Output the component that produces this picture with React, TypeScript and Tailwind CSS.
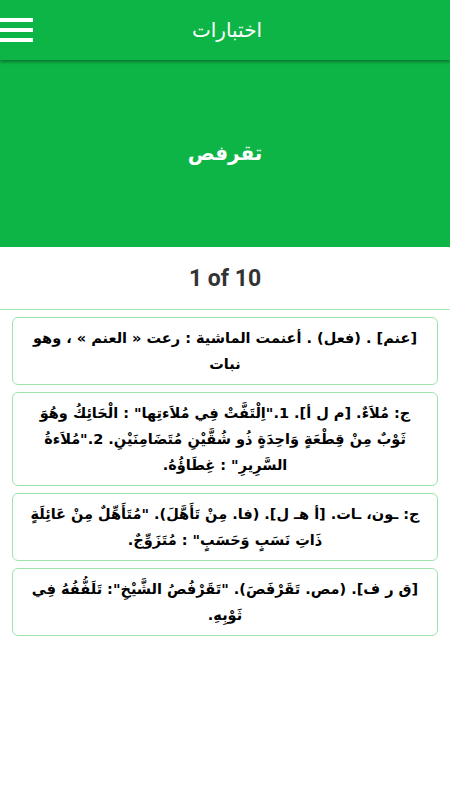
import React from "react";

const cards = [
  "[عنم] .  (فعل) . أعنمت الماشية : رعت « العنم » ، وهو نبات",
  "ج: مُلاَءٌ. [م ل أ]. 1.\"اِلْتَفَّتْ فِي مُلاَءتِها\" : الْحَائِكُ وهُوَ ثَوْبٌ\u00a0مِنْ قِطْعَةٍ وَاحِدَةٍ ذُو شُقَّيْنِ مُتَضَامِنَيْنِ. 2.\"مُلاَءةُ السَّرِيرِ\" : غِطَاؤُهُ.",
  "ج: ـون، ـات. [أ هـ ل]. (فا. مِنْ تَأَهَّلَ). \"مُتَأَهِّلٌ مِنْ عَائِلَةٍ ذَاتِ نَسَبٍ وَحَسَبٍ\" : مُتَزَوِّجٌ.",
  "[ق ر ف]. (مص. تَقَرْفَصَ). \"تَقَرْفُصُ الشَّيْخِ\": تَلَفُّفُهُ فِي ثَوْبِهِ.",
];

export default function App() {
  return (
    <div className="w-[450px] h-[800px] bg-white overflow-hidden" style={{ fontFamily: "Roboto, 'DejaVu Sans', sans-serif" }}>
      <header className="relative h-[60px] bg-[#0db546] flex items-center justify-center shadow-[0_2px_3px_rgba(0,0,0,0.35)] z-10">
        <div className="absolute left-0 top-[18px] flex flex-col gap-[6px]">
          <div className="w-[33px] h-[4px] bg-white" />
          <div className="w-[33px] h-[4px] bg-white" />
          <div className="w-[33px] h-[4px] bg-white" />
        </div>
        <h1 className="text-white text-[20px] font-normal pl-[4px]" dir="rtl" style={{ fontFamily: "'DejaVu Sans', sans-serif" }}>اختبارات</h1>
      </header>
      <section className="h-[187px] bg-[#0db546] flex items-center justify-center">
        <h2 className="text-white text-[20px] font-bold mb-[2px]" dir="rtl" style={{ fontFamily: "'DejaVu Sans', sans-serif" }}>تقرفص</h2>
      </section>
      <div className="h-[63px] flex items-center justify-center border-b border-[#a6e8b5]">
        <span className="text-[#333333] text-[23px] font-bold pt-[3px]">1 of 10</span>
      </div>
      <div className="flex flex-col gap-[7px] px-3 pt-[7px]">
        {cards.map((t, i) => (
          <div
            key={i}
            dir="rtl"
            className="border border-[#9ee3ad] rounded-[6px] px-2 py-[7px] text-center text-black font-bold text-[14.5px] leading-[26px]"
            style={{ fontFamily: "'DejaVu Sans', sans-serif" }}
          >
            {t}
          </div>
        ))}
      </div>
    </div>
  );
}
